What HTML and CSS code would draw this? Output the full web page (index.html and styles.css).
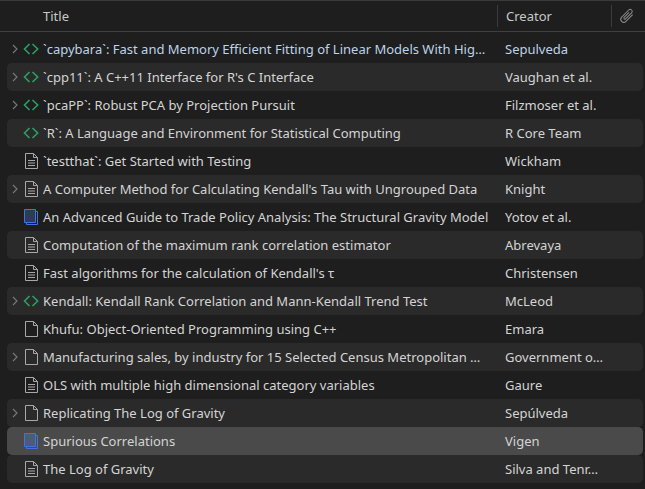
FILE: index.html
```html
<!doctype html>
<html>
<head>
    <meta charset="utf-8">
    <title>Library</title>
    <link rel="stylesheet" href="styles.css">
</head>
<body>
<svg class="defs" width="0" height="0">
    <symbol id="chev" viewBox="0 0 8 12"><path d="M2 2 6 6 2 10" fill="none" stroke="#7a7a7a" stroke-width="1.1"/></symbol>
    <symbol id="code" viewBox="0 0 16 16"><path d="M6.500 3 1.500 8l5 5M9.500 3l5.200 5-5.200 5" fill="none" stroke="#2c9f66" stroke-width="1.600"/></symbol>
    <symbol id="doc" viewBox="0 0 16 16"><path d="M2.500.5h8l4 4v11h-12zM10.500.5v4h4" fill="none" stroke="#a8a8a8"/><path d="M5 7.500h7M5 10h7M5 12.500h7" stroke="#a8a8a8"/></symbol>
    <symbol id="blank" viewBox="0 0 16 16"><path d="M2.500.5h8l4 4v11h-12zM10.500.5v4h4" fill="none" stroke="#a8a8a8"/></symbol>
    <symbol id="book" viewBox="0 0 16 16"><path d="M3.500 2.500h11v13h-11z" fill="none" stroke="#3d74e0"/><path d="M1.500.5h11v13h-11z" fill="#2f3a55" stroke="#3d74e0"/></symbol>
    <symbol id="book-sel" viewBox="0 0 16 16"><path d="M3.500 2.500h11v13h-11z" fill="none" stroke="#3d74e0"/><path d="M1.500.5h11v13h-11z" fill="#4f5a75" stroke="#3d74e0"/></symbol>
</svg>

<div class="table">
    <div class="head">
        <div class="h-title">Title</div>
        <div class="h-creator">Creator</div>
        <div class="h-clip">
            <svg width="18" height="18" viewBox="0 0 18 18"><path d="M12 4v9.500a3 3 0 0 1-6 0V3.500a2 2 0 0 1 4 0V12a1 1 0 0 1-2 0V5" fill="none" stroke="#8c8c8c" transform="rotate(45 9 9)"/></svg>
        </div>
    </div>
    <div class="rows">
        <div class="row note"><span class="tw"><svg class="ch"><use href="#chev"/></svg></span><svg class="ic"><use href="#code"/></svg><span class="title">`capybara`: Fast and Memory Efficient Fitting of Linear Models With Hig…</span><span class="creator">Sepulveda</span></div>
        <div class="row"><span class="tw"><svg class="ch"><use href="#chev"/></svg></span><svg class="ic"><use href="#code"/></svg><span class="title">`cpp11`: A C++11 Interface for R's C Interface</span><span class="creator">Vaughan et al.</span></div>
        <div class="row"><span class="tw"><svg class="ch"><use href="#chev"/></svg></span><svg class="ic"><use href="#code"/></svg><span class="title">`pcaPP`: Robust PCA by Projection Pursuit</span><span class="creator">Filzmoser et al.</span></div>
        <div class="row"><span class="tw"></span><svg class="ic"><use href="#code"/></svg><span class="title">`R`: A Language and Environment for Statistical Computing</span><span class="creator">R Core Team</span></div>
        <div class="row"><span class="tw"></span><svg class="ic"><use href="#doc"/></svg><span class="title">`testthat`: Get Started with Testing</span><span class="creator">Wickham</span></div>
        <div class="row"><span class="tw"><svg class="ch"><use href="#chev"/></svg></span><svg class="ic"><use href="#doc"/></svg><span class="title">A Computer Method for Calculating Kendall's Tau with Ungrouped Data</span><span class="creator">Knight</span></div>
        <div class="row"><span class="tw"></span><svg class="ic"><use href="#book"/></svg><span class="title">An Advanced Guide to Trade Policy Analysis: The Structural Gravity Model</span><span class="creator">Yotov et al.</span></div>
        <div class="row"><span class="tw"></span><svg class="ic"><use href="#doc"/></svg><span class="title">Computation of the maximum rank correlation estimator</span><span class="creator">Abrevaya</span></div>
        <div class="row"><span class="tw"></span><svg class="ic"><use href="#doc"/></svg><span class="title">Fast algorithms for the calculation of Kendall's τ</span><span class="creator">Christensen</span></div>
        <div class="row"><span class="tw"><svg class="ch"><use href="#chev"/></svg></span><svg class="ic"><use href="#code"/></svg><span class="title">Kendall: Kendall Rank Correlation and Mann-Kendall Trend Test</span><span class="creator">McLeod</span></div>
        <div class="row"><span class="tw"></span><svg class="ic"><use href="#blank"/></svg><span class="title">Khufu: Object-Oriented Programming using C++</span><span class="creator">Emara</span></div>
        <div class="row"><span class="tw"><svg class="ch"><use href="#chev"/></svg></span><svg class="ic"><use href="#blank"/></svg><span class="title">Manufacturing sales, by industry for 15 Selected Census Metropolitan …</span><span class="creator">Government o…</span></div>
        <div class="row"><span class="tw"></span><svg class="ic"><use href="#doc"/></svg><span class="title">OLS with multiple high dimensional category variables</span><span class="creator">Gaure</span></div>
        <div class="row"><span class="tw"><svg class="ch"><use href="#chev"/></svg></span><svg class="ic"><use href="#blank"/></svg><span class="title">Replicating The Log of Gravity</span><span class="creator">Sepúlveda</span></div>
        <div class="row selected"><span class="tw"></span><svg class="ic"><use href="#book-sel"/></svg><span class="title">Spurious Correlations</span><span class="creator">Vigen</span></div>
        <div class="row"><span class="tw"></span><svg class="ic"><use href="#doc"/></svg><span class="title">The Log of Gravity</span><span class="creator">Silva and Tenr…</span></div>
    </div>
</div>
</body>
</html>
```

FILE: styles.css
```css
html, body {
    margin: 0;
    height: 100%;
}
body {
    background: #1e1e1e;
    color: #d4d4d4;
    font-family: "Noto Sans", sans-serif;
    font-size: 13px;
    overflow: hidden;
}
.defs {
    position: absolute;
}
.table {
    border-top: 1px solid #3a3a3a;
}
.head {
    display: flex;
    height: 30px;
    align-items: center;
    border-bottom: 1px solid #404040;
    color: #c8c8c8;
}
.h-title {
    width: 497px;
    padding-left: 43px;
    box-sizing: border-box;
}
.h-creator {
    width: 114px;
    height: 22px;
    line-height: 22px;
    padding-left: 8px;
    box-sizing: border-box;
    border-left: 1px solid #3c3c3c;
}
.h-clip {
    height: 22px;
    flex: 1;
    border-left: 1px solid #3c3c3c;
    display: flex;
    align-items: center;
    padding-left: 6px;
}
.rows {
    padding: 3px 2px 0 7px;
}
.row {
    display: flex;
    align-items: center;
    height: 28px;
    border-radius: 5px;
}
.row:nth-child(even) {
    background: #2a2a2a;
}
.row.selected {
    background: #4a4a4a;
}
.row.note .title,
.row.note .creator {
    color: #bdd3e8;
}
.tw {
    width: 16px;
    display: flex;
    justify-content: center;
}
.ch {
    width: 8px;
    height: 12px;
}
.ic {
    width: 16px;
    height: 16px;
    margin-right: 4px;
    flex: none;
}
.title {
    width: 446px;
    flex: none;
    margin-right: 16px;
    white-space: nowrap;
}
.creator {
    width: 104px;
    white-space: nowrap;
}
```
